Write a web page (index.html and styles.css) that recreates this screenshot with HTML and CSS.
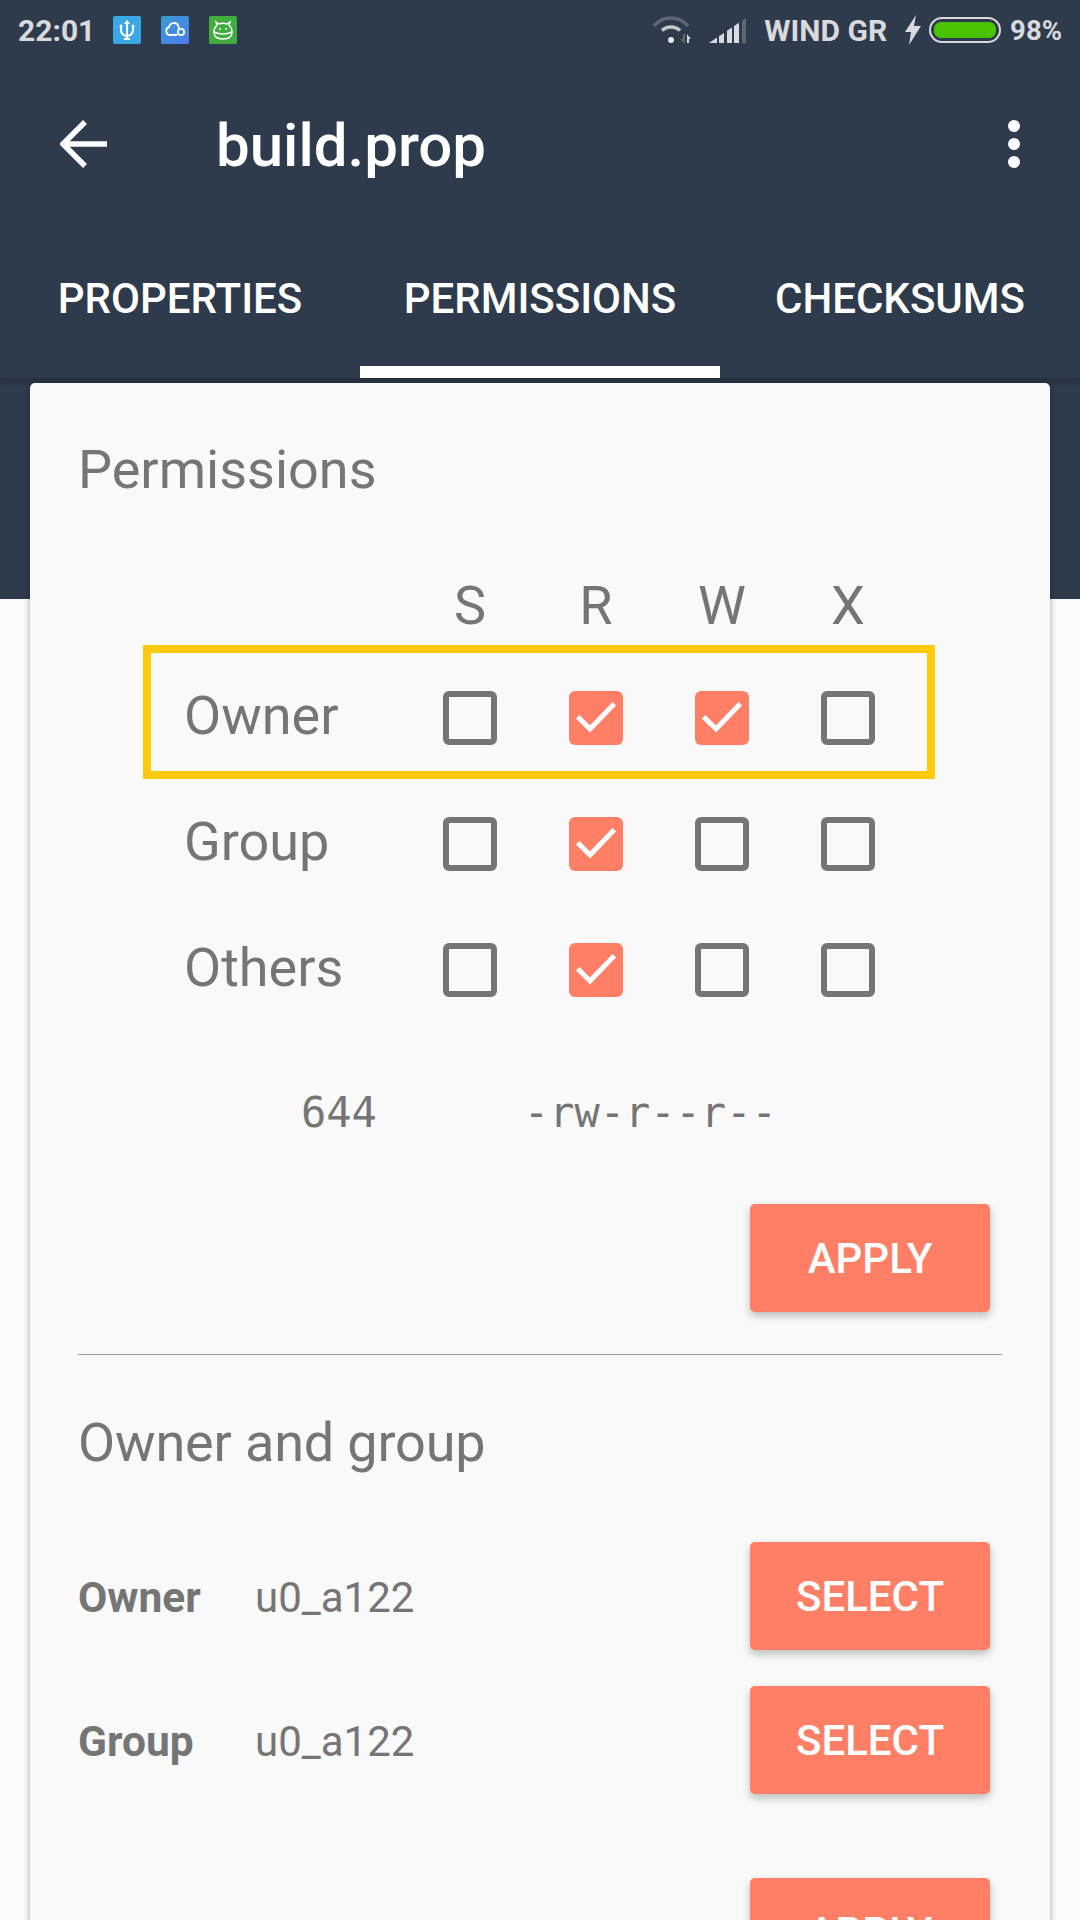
FILE: index.html
```html
<!DOCTYPE html>
<html lang="en">
<head>
    <meta charset="UTF-8">
    <meta name="viewport" content="width=device-width, initial-scale=1.0">
    <title>build.prop</title>
    <link rel="stylesheet" href="styles.css">
</head>
<body>
    <div class="header">
        <div class="statusbar">
            <span class="time">22:01</span>
            <div class="notif-icons">
                <svg class="notif" width="28" height="28" viewBox="0 0 28 28">
                    <rect width="28" height="28" rx="2" fill="#3aa8e4"/>
                    <path d="M14 5v18M11 23h6M8 10v4a6 6 0 0 0 12 0v-4" fill="none" stroke="#fff" stroke-width="2"/>
                    <path d="M14 4l3 4h-6zM8 8l2 3H6zM20 8l2 3h-4z" fill="#fff"/>
                </svg>
                <svg class="notif" width="28" height="28" viewBox="0 0 28 28">
                    <defs>
                        <linearGradient id="cloudbg" x1="0" y1="0" x2="1" y2="1">
                            <stop offset="0" stop-color="#3a9bd0"/>
                            <stop offset="1" stop-color="#4a7df0"/>
                        </linearGradient>
                    </defs>
                    <rect width="28" height="28" rx="2" fill="url(#cloudbg)"/>
                    <path d="M15 19H9a4 4 0 0 1-1-7.800a5 5 0 0 1 9.500-1.200" fill="none" stroke="#fff" stroke-width="1.800"/>
                    <path d="M9 19h7M17 10a4 4 0 0 1 1 3" fill="none" stroke="#fff" stroke-width="1.800"/>
                    <circle cx="20" cy="16" r="3.200" fill="none" stroke="#fff" stroke-width="1.800"/>
                </svg>
                <svg class="notif" width="28" height="28" viewBox="0 0 28 28">
                    <rect width="28" height="28" rx="2" fill="#41ad3f"/>
                    <path d="M8 9l-1-3 3 2q4-1.500 8 0l3-2-1 3q3 3 3 7 0 7-9 7t-9-7q0-4 3-7z" fill="none" stroke="#fff" stroke-width="1.500"/>
                    <path d="M5 16q9 4 18 0" fill="none" stroke="#fff" stroke-width="1.500"/>
                    <circle cx="11" cy="13" r="1" fill="#fff"/>
                    <circle cx="17" cy="13" r="1" fill="#fff"/>
                </svg>
            </div>
            <div class="status-right">
                <svg class="wifi" width="40" height="30" viewBox="0 0 40 30">
                    <path d="M2 11A22 22 0 0 1 36 11" fill="none" stroke="#5d6875" stroke-width="3.500"/>
                    <path d="M10 15.500A13 13 0 0 1 28 15.500" fill="none" stroke="#c4c8ce" stroke-width="3.500"/>
                    <circle cx="19" cy="25" r="3" fill="#e4e6e9"/>
                    <path d="M33 19v9h-1l-4-4h3v-5z" fill="#5d6875"/>
                    <path d="M35 28v-9l4 5h-2v4z" fill="#d8dade"/>
                </svg>
                <svg class="signal" width="37" height="25" viewBox="0 0 37 25">
                    <path d="M0 25L8 19.600V25Z" fill="#d8dade"/>
                    <path d="M10 18.200L15 14.900V25H10Z" fill="#d8dade"/>
                    <path d="M18 12.800L23 9.500V25H18Z" fill="#d8dade"/>
                    <path d="M25 8.100L30 4.700V25H25Z" fill="#d8dade"/>
                    <path d="M33 2.700L37 0V25H33Z" fill="#5d6875"/>
                </svg>
                <span class="carrier">WIND GR</span>
                <svg class="bolt" width="16" height="30" viewBox="0 0 16 30">
                    <path d="M11 0L0 17h6L4 30 16 11h-7z" fill="#d8dade"/>
                </svg>
                <div class="battery"><div class="battery-fill"></div></div>
                <span class="percent">98%</span>
            </div>
        </div>
        <div class="toolbar">
            <svg class="back" width="48" height="48" viewBox="0 0 48 48">
                <path d="M47 24H3M25 2L3 24l22 22" fill="none" stroke="#fff" stroke-width="5.500"/>
            </svg>
            <h1>build.prop</h1>
            <div class="overflow"><i></i><i></i><i></i></div>
        </div>
        <div class="tabs">
            <div class="tab">PROPERTIES</div>
            <div class="tab active">PERMISSIONS</div>
            <div class="tab">CHECKSUMS</div>
        </div>
    </div>

    <div class="card">
        <h2>Permissions</h2>
        <div class="perm-grid">
            <div class="perm-head"><span>S</span><span>R</span><span>W</span><span>X</span></div>
            <div class="perm-row highlighted">
                <span class="perm-label">Owner</span>
                <span class="box"></span>
                <span class="box on"><svg viewBox="0 0 54 54"><path d="M8.700 25.700L21 38L45.300 12.800"/></svg></span>
                <span class="box on"><svg viewBox="0 0 54 54"><path d="M8.700 25.700L21 38L45.300 12.800"/></svg></span>
                <span class="box"></span>
            </div>
            <div class="perm-row">
                <span class="perm-label">Group</span>
                <span class="box"></span>
                <span class="box on"><svg viewBox="0 0 54 54"><path d="M8.700 25.700L21 38L45.300 12.800"/></svg></span>
                <span class="box"></span>
                <span class="box"></span>
            </div>
            <div class="perm-row">
                <span class="perm-label">Others</span>
                <span class="box"></span>
                <span class="box on"><svg viewBox="0 0 54 54"><path d="M8.700 25.700L21 38L45.300 12.800"/></svg></span>
                <span class="box"></span>
                <span class="box"></span>
            </div>
        </div>
        <div class="mode-line"><span class="octal">644</span><span class="symbolic">-rw-r--r--</span></div>
        <div class="apply-row"><button class="btn">APPLY</button></div>
        <hr class="divider">
        <h2 class="owner-title">Owner and group</h2>
        <div class="owner-row">
            <span class="owner-key">Owner</span><span class="owner-val">u0_a122</span>
            <button class="btn">SELECT</button>
        </div>
        <div class="owner-row second">
            <span class="owner-key">Group</span><span class="owner-val">u0_a122</span>
            <button class="btn">SELECT</button>
        </div>
        <div class="apply-row last"><button class="btn">APPLY</button></div>
    </div>
</body>
</html>
```
FILE: styles.css
```css
html, body {
    margin: 0;
    padding: 0;
    height: 1920px;
    overflow: hidden;
}
body {
    font-family: Roboto, sans-serif;
    background-color: #fafafa;
    position: relative;
}
.header {
    background-color: #2e3b4c;
    height: 599px;
}
.statusbar {
    height: 60px;
    display: flex;
    align-items: center;
    padding: 0 18px;
    color: #d8dade;
    font-size: 30px;
    font-weight: 700;
}
.time {
    width: 95px;
}
.notif-icons {
    display: flex;
    gap: 20px;
}
.notif {
    display: block;
}
.status-right {
    margin-left: auto;
    display: flex;
    align-items: center;
}
.wifi {
    margin-right: 17px;
}
.signal {
    margin-right: 18px;
    margin-top: 1px;
}
.bolt {
    margin-left: 18px;
    margin-right: 8px;
}
.battery {
    width: 72px;
    height: 26px;
    box-sizing: border-box;
    border: 2px solid #d8dade;
    border-radius: 13px;
    padding: 2px;
    margin-right: 9px;
}
.battery-fill {
    height: 100%;
    background-color: #48c400;
    border-radius: 8px;
    border: 1px solid #2e3b4c;
    box-sizing: border-box;
}
.percent {
    font-size: 27.500px;
}
.toolbar {
    height: 170px;
    display: flex;
    align-items: center;
    padding: 0 60px;
}
.back {
    margin-bottom: 2px;
}
.toolbar h1 {
    margin: 0 0 0 108px;
    font-size: 60px;
    font-weight: 500;
    color: #fff;
}
.overflow {
    margin-left: auto;
    margin-bottom: 2px;
    display: flex;
    flex-direction: column;
    gap: 6px;
}
.overflow i {
    display: block;
    width: 12px;
    height: 12px;
    border-radius: 50%;
    background-color: #fff;
}
.tabs {
    display: flex;
    height: 148px;
    box-shadow: 0 3px 6px rgba(0, 0, 0, 0.2);
}
.tab {
    width: 360px;
    box-sizing: border-box;
    height: 148px;
    border-bottom: 12px solid transparent;
    display: flex;
    align-items: center;
    justify-content: center;
    color: #fff;
    font-size: 42px;
    font-weight: 500;
}
.tab.active {
    border-bottom-color: #fff;
}
.card {
    position: absolute;
    left: 30px;
    top: 383px;
    width: 1020px;
    height: 1600px;
    background-color: #f9f9f9;
    border-radius: 5px;
    box-shadow: 0 1px 6px rgba(0, 0, 0, 0.35);
    box-sizing: border-box;
    padding: 0 48px;
    color: #757575;
}
.card h2 {
    margin: 0;
    font-size: 54px;
    font-weight: 400;
    line-height: 60px;
    padding-top: 57px;
}
.perm-grid {
    margin-top: 76px;
    margin-left: 65px;
    width: 792px;
}
.perm-head {
    display: grid;
    grid-template-columns: repeat(4, 126px);
    padding-left: 264px;
    font-size: 54px;
    line-height: 60px;
    text-align: center;
    margin-bottom: 9px;
}
.perm-row {
    height: 126px;
    display: grid;
    grid-template-columns: 264px repeat(4, 126px);
    align-items: center;
    justify-items: center;
    box-sizing: border-box;
}
.perm-row.highlighted {
    outline: 8px solid #ffc90e;
    outline-offset: -8px;
    height: 134px;
    padding-top: 12px;
    margin-bottom: 2px;
}
.perm-label {
    justify-self: start;
    padding-left: 41px;
    padding-bottom: 5px;
    font-size: 54px;
}
.box {
    width: 54px;
    height: 54px;
    box-sizing: border-box;
    border: 6px solid #757575;
    border-radius: 6px;
}
.box.on {
    background-color: #ff7f66;
    border: none;
}
.box svg {
    display: block;
}
.box svg path {
    fill: none;
    stroke: #fff;
    stroke-width: 5;
}
.mode-line {
    font-family: "DejaVu Sans Mono", monospace;
    font-size: 42px;
    margin-top: 50px;
    height: 60px;
    line-height: 60px;
    display: flex;
    padding-left: 223px;
}
.symbolic {
    margin-left: 147px;
}
.apply-row {
    display: flex;
    justify-content: flex-end;
    padding-right: 12px;
    margin-top: 61px;
}
.btn {
    width: 240px;
    height: 108px;
    border: none;
    border-radius: 5px;
    background-color: #ff7f66;
    color: #fff;
    font-family: Roboto, sans-serif;
    font-size: 42px;
    font-weight: 500;
    box-shadow: 0 4px 8px rgba(0, 0, 0, 0.25);
}
.divider {
    border: none;
    border-top: 1px solid #999;
    margin: 42px 0 0;
}
.card h2.owner-title {
    padding-top: 58px;
    letter-spacing: -0.160px;
}
.owner-row {
    display: flex;
    align-items: center;
    margin-top: 69px;
    padding-right: 12px;
}
.owner-row.second {
    margin-top: 36px;
}
.owner-key {
    width: 177px;
    padding-top: 2px;
    font-size: 42.500px;
    font-weight: 700;
}
.owner-val {
    padding-top: 2px;
    font-size: 42px;
}
.owner-row .btn {
    margin-left: auto;
}
.apply-row.last {
    margin-top: 84px;
}
```
